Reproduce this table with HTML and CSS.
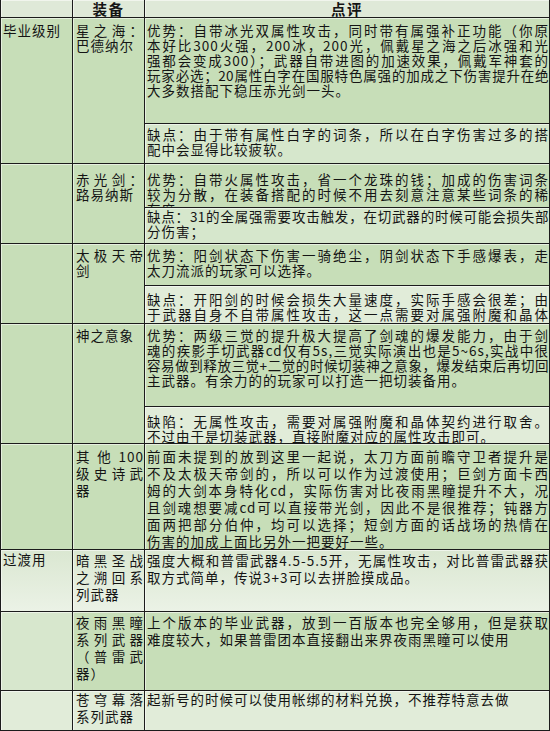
FILE: index.html
```html
<!DOCTYPE html>
<html lang="zh-CN">
<head>
<meta charset="utf-8">
<title>剑魂武器推荐</title>
<link rel="stylesheet" href="styles.css">
</head>
<body>
<div class="sheet">
  <div class="cell head"></div>
  <div class="cell head">装备</div>
  <div class="cell head">点评</div>

  <div class="cell grp t5">毕业级别</div>
  <div class="cell name t5">星之海：巴德纳尔</div>
  <div class="cell cm">
    <div class="pt h105 t5">
      <span class="ln">优势：自带冰光双属性攻击，同时带有属强补正功能（你原</span>
      <span class="ln">本好比300火强，200冰，200光，佩戴星之海之后冰强和光</span>
      <span class="ln">强都会变成300）；武器自带进图的加速效果，佩戴军神套的</span>
      <span class="ln tight">玩家必选；20属性白字在国服特色属强的加成之下伤害提升在绝</span>
      <span class="ln">大多数搭配下稳压赤光剑一头。</span>
    </div>
    <div class="pt alt t3">
      <span class="ln">缺点：由于带有属性白字的词条，所以在白字伤害过多的搭</span>
      <span class="ln">配中会显得比较疲软。</span>
    </div>
  </div>

  <div class="cell grp"></div>
  <div class="cell name t8">赤光剑：路易纳斯</div>
  <div class="cell cm">
    <div class="pt h43 t8">
      <span class="ln">优势：自带火属性攻击，省一个龙珠的钱；加成的伤害词条</span>
      <span class="ln">较为分散，在装备搭配的时候不用去刻意注意某些词条的稀</span>
      <span class="ln">有度。</span>
    </div>
    <div class="pt alt t1">
      <span class="ln tight">缺点：31的全属强需要攻击触发，在切武器的时候可能会损失部</span>
      <span class="ln">分伤害；</span>
    </div>
  </div>

  <div class="cell grp"></div>
  <div class="cell name t4">太极天帝剑</div>
  <div class="cell cm">
    <div class="pt h41 t4">
      <span class="ln">优势：阳剑状态下伤害一骑绝尘，阴剑状态下手感爆表，走</span>
      <span class="ln">太刀流派的玩家可以选择。</span>
    </div>
    <div class="pt pale t6">
      <span class="ln">缺点：开阳剑的时候会损失大量速度，实际手感会很差；由</span>
      <span class="ln">于武器自身不自带属性攻击，这一点需要对属强附魔和晶体</span>
      <span class="ln">契约进行取舍。</span>
    </div>
  </div>

  <div class="cell grp"></div>
  <div class="cell name t4">神之意象</div>
  <div class="cell cm">
    <div class="pt h82 t4">
      <span class="ln">优势：两级三觉的提升极大提高了剑魂的爆发能力，由于剑</span>
      <span class="ln">魂的疾影手切武器cd仅有5s,三觉实际演出也是5~6s,实战中很</span>
      <span class="ln tight">容易做到释放三觉+二觉的时候切装神之意象，爆发结束后再切回</span>
      <span class="ln">主武器。有余力的的玩家可以打造一把切装备用。</span>
    </div>
    <div class="pt pale t7">
      <span class="ln">缺陷：无属性攻击，需要对属强附魔和晶体契约进行取舍。</span>
      <span class="ln">不过由于是切装武器，直接附魔对应的属性攻击即可。</span>
    </div>
  </div>

  <div class="cell grp"></div>
  <div class="cell name loose t4">其他100级史诗武器</div>
  <div class="cell cm">
    <div class="pt loose t4">
      <span class="ln">前面未提到的放到这里一起说，太刀方面前瞻守卫者提升是</span>
      <span class="ln">不及太极天帝剑的，所以可以作为过渡使用；巨剑方面卡西</span>
      <span class="ln">姆的大剑本身特化cd，实际伤害对比夜雨黑瞳提升不大，况</span>
      <span class="ln">且剑魂想要减cd可以直接带光剑，因此不是很推荐；钝器方</span>
      <span class="ln">面两把部分伯仲，均可以选择；短剑方面的话战场的热情在</span>
      <span class="ln">伤害的加成上面比另外一把要好一些。</span>
    </div>
  </div>

  <div class="cell grp fade t2">过渡用</div>
  <div class="cell name fade loose t2">暗黑圣战之溯回系列武器</div>
  <div class="cell cm">
    <div class="pt fade loose t2">
      <span class="ln">强度大概和普雷武器4.5-5.5开，无属性攻击，对比普雷武器获</span>
      <span class="ln">取方式简单，传说3+3可以去拼脸摸成品。</span>
    </div>
  </div>

  <div class="cell grp mid"></div>
  <div class="cell name loose t2">夜雨黑瞳系列武器（普雷武器）</div>
  <div class="cell cm">
    <div class="pt loose t2">
      <span class="ln">上个版本的毕业武器，放到一百版本也完全够用，但是获取</span>
      <span class="ln">难度较大，如果普雷团本直接翻出来界夜雨黑瞳可以使用</span>
    </div>
  </div>

  <div class="cell grp pale"></div>
  <div class="cell name pale loose t0">苍穹幕落系列武器</div>
  <div class="cell cm">
    <div class="pt pale loose t0">
      <span class="ln">起新号的时候可以使用帐绑的材料兑换，不推荐特意去做</span>
    </div>
  </div>
</div>
</body>
</html>
```

FILE: styles.css
```css
* {
  box-sizing: border-box;
}

html,
body {
  margin: 0;
  padding: 0;
  background: #ffffff;
}

body {
  font-family: "Noto Sans CJK SC", "Noto Sans", sans-serif;
  font-size: 13.5px;
  letter-spacing: 1px;
  line-height: 15px;
  color: #141414;
}

.sheet {
  --line: #1c1c1c;
  --green: #c7deb8;
  --alt: #d6e7cc;
  --pale: #e1ecd9;
  display: grid;
  grid-template-columns: 72px 72px 1fr;
  grid-template-rows: 17px 146px 80px 80px 120px 106px 62px 79px 40px;
  width: 550px;
  height: 731px;
  border-right: 1px solid var(--line);
  border-bottom: 1px solid var(--line);
  background: var(--green);
}

.cell {
  border-left: 1px solid var(--line);
  border-top: 1px solid var(--line);
  overflow: hidden;
  background: var(--green);
  box-shadow: inset 1px 1px 0 rgba(255, 255, 255, 0.55);
}

.head {
  border-top: none;
  overflow: visible;
  background: #dfe9d8;
  font-weight: bold;
  font-size: 14.5px;
  letter-spacing: 1.5px;
  line-height: 17px;
  text-align: center;
}

.grp {
  grid-column: 1;
  padding-left: 2px;
}

.name {
  grid-column: 2;
  padding-left: 3px;
  padding-right: 0;
  text-align: justify;
}

.cm {
  grid-column: 3;
  display: flex;
  flex-direction: column;
  box-shadow: none;
}

.pt {
  flex: 1 1 auto;
  padding-left: 2px;
  padding-right: 0;
  overflow: hidden;
  box-shadow: inset 1px 1px 0 rgba(255, 255, 255, 0.55);
}

.pt + .pt {
  border-top: 1px solid var(--line);
}

.h105 { flex: 0 0 105px; }
.h43 { flex: 0 0 43px; }
.h41 { flex: 0 0 41px; }
.h82 { flex: 0 0 82px; }

.alt {
  background: var(--alt);
}

.pale {
  background: var(--pale);
}

.mid {
  background: #d7e7cd;
}

.fade {
  background: linear-gradient(#dae7d1, #ebf2e6);
}

.loose {
  line-height: 17px;
}

.ln {
  display: block;
  text-align: justify;
  text-align-last: justify;
}

.ln:last-child {
  text-align-last: auto;
}

.tight {
  letter-spacing: 0.4px;
}

.t0 { padding-top: 0; }
.t1 { padding-top: 1px; }
.t2 { padding-top: 2px; }
.t3 { padding-top: 3px; }
.t4 { padding-top: 4px; }
.t5 { padding-top: 5px; }
.t6 { padding-top: 6px; }
.t7 { padding-top: 7px; }
.t8 { padding-top: 8px; }
```
